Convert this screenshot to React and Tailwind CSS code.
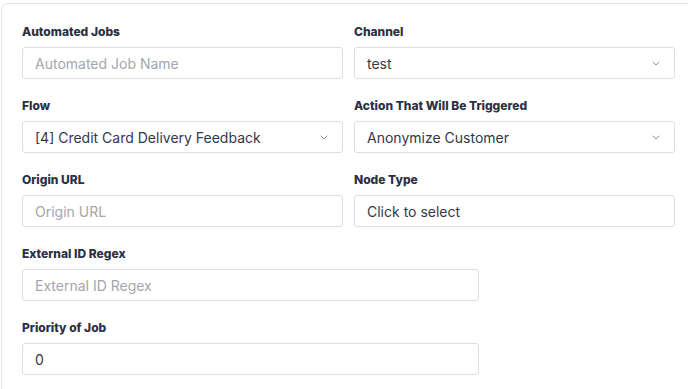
import React from "react";

function Chevron() {
    return (
        <svg width="8" height="5" viewBox="0 0 8 5" fill="none" className="shrink-0">
            <path d="M1 1l3 3 3-3" stroke="#8a8d99" strokeWidth="1" strokeLinecap="round" strokeLinejoin="round" />
        </svg>
    );
}

function Field({ label, children }) {
    return (
        <div className="flex flex-col">
            <label className="text-[12px] leading-4 font-extrabold text-[#2c2f45]">{label}</label>
            <div className="mt-[7px]">{children}</div>
        </div>
    );
}

function TextBox({ placeholder, value }) {
    return (
        <input
            type="text"
            readOnly
            placeholder={placeholder}
            value={value}
            className="w-full h-[32px] px-3 border border-[#dcdde4] rounded-[3px] text-[14px] text-[#33374a] placeholder-[#a4a6ae] bg-white outline-none"
        />
    );
}

function SelectBox({ value, arrow = true }) {
    return (
        <div className="w-full h-[32px] pl-3 pr-[14px] border border-[#dcdde4] rounded-[3px] flex items-center justify-between bg-white">
            <span className="text-[14px] text-[#33374a]">{value}</span>
            {arrow && <Chevron />}
        </div>
    );
}

export default function App() {
    return (
        <div className="w-[688px] h-[389px] overflow-hidden bg-white" style={{ fontFamily: "Inter, 'Noto Sans', sans-serif" }}>
            <div className="ml-px mt-[3px] w-[720px] h-[420px] border border-[#e3e4ea] rounded-[6px] pt-5 pl-5">
                <div className="w-[653px] flex flex-col gap-[19px]">
                    {/* Ligne 1 */}
                    <div className="grid grid-cols-2 gap-[11px]">
                        <Field label="Automated Jobs">
                            <TextBox placeholder="Automated Job Name" value="" />
                        </Field>
                        <Field label="Channel">
                            <SelectBox value="test" />
                        </Field>
                    </div>
                    {/* Ligne 2 */}
                    <div className="grid grid-cols-2 gap-[11px]">
                        <Field label="Flow">
                            <SelectBox value="[4] Credit Card Delivery Feedback" />
                        </Field>
                        <Field label="Action That Will Be Triggered">
                            <SelectBox value="Anonymize Customer" />
                        </Field>
                    </div>
                    {/* Ligne 3 */}
                    <div className="grid grid-cols-2 gap-[11px]">
                        <Field label="Origin URL">
                            <TextBox placeholder="Origin URL" value="" />
                        </Field>
                        <Field label="Node Type">
                            <SelectBox value="Click to select" arrow={false} />
                        </Field>
                    </div>
                    <div className="w-[457px]">
                        <Field label="External ID Regex">
                            <TextBox placeholder="External ID Regex" value="" />
                        </Field>
                    </div>
                    <div className="w-[457px]">
                        <Field label="Priority of Job">
                            <TextBox placeholder="" value="0" />
                        </Field>
                    </div>
                </div>
            </div>
        </div>
    );
}
